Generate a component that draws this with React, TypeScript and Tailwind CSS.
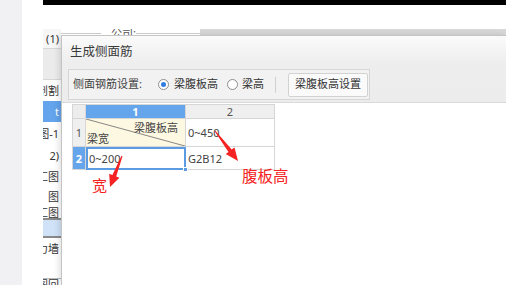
import React from 'react';

const font = "font-['Noto_Sans','Noto_Sans_CJK_SC',sans-serif]";

const listRows = [
  { h: 'h-[19px]', text: '(1)', cls: 'bg-[#f6f6f6] text-[#333]' },
  { h: 'h-[32px]', text: '', cls: 'bg-[#ebebeb] border-y border-[#d6d6d6]' },
  { h: 'h-[21px]', text: '剖割', cls: 'bg-white text-[#333]' },
  { h: 'h-[21px]', text: 't', cls: 'bg-[#63a4ec] text-white' },
  { h: 'h-[23px]', text: '图-1', cls: 'bg-white text-[#333]' },
  { h: 'h-[21px]', text: '2)', cls: 'bg-white text-[#333]' },
  { h: 'h-[20px]', text: '汇图', cls: 'bg-white text-[#333]' },
  { h: 'h-[20px]', text: '图', cls: 'bg-white text-[#333]' },
  { h: 'h-[12px]', text: '汇图', cls: 'bg-white text-[#333]' },
  { h: 'h-[20px]', text: '', cls: 'bg-[#cfe2f7] border-y-2 border-[#8a8a8a]' },
  { h: 'h-[20px]', text: '剪力墙', cls: 'bg-white text-[#333]' },
  { h: 'h-[20px]', text: '', cls: 'bg-white' },
  { h: 'h-[12px]', text: '图回', cls: 'bg-white text-[#333] border-t border-[#bbb]' },
];

const Radio = ({ checked }: { checked?: boolean }) => (
  <span className="w-[11px] h-[11px] rounded-full border border-[#8d8d8d] bg-white flex items-center justify-center">
    {checked && <span className="w-[5px] h-[5px] rounded-full bg-[#2f7de1]" />}
  </span>
);

export default function App() {
  return (
    <div className={`relative w-[506px] h-[285px] overflow-hidden bg-white flex ${font}`}>
      <div className="w-[22px] h-full bg-[#f1f1f3]" />
      <div className="w-[21px] h-full bg-white" />

      <div className="flex-1 flex flex-col min-w-0">
        <div className="h-[5px] bg-black" />
        <div className="h-[24px] bg-white" />

        {/* app behind the dialog */}
        <div className="flex-1 flex min-h-0">
          <div className="w-[18px] flex flex-col overflow-hidden text-[11px] leading-none">
            {listRows.map((r, i) => (
              <div key={i} className={`${r.h} shrink-0 flex items-center justify-end pr-[2px] whitespace-nowrap overflow-hidden ${r.cls}`}>
                {r.text}
              </div>
            ))}
          </div>

          <div className="flex-1 flex flex-col min-w-0">
            <div className="h-[6px] flex overflow-hidden">
              <div className="w-[139px] flex items-start bg-white relative">
                <div className="w-[40px] mt-[4px] h-px bg-[#c9c9c9]" />
                <span className="ml-[10px] -mt-[2px] text-[11px] leading-none text-[#555]">公司:</span>
                <div className="flex-1 mt-[4px] h-px bg-[#c9c9c9]" />
              </div>
              <div className="flex-1 bg-[#d8d8d8]" />
            </div>

            {/* dialog */}
            <div className="flex-1 flex flex-col border-l border-t border-[#c4c4c4] shadow-[-2px_0_6px_rgba(0,0,0,0.12)] min-h-0">
              <div className="bg-[linear-gradient(to_bottom,#fbfbfb,#eeeeee_40%,#ececec)] border-b border-[#dadada]">
                <div className="h-[33px] pl-[8px] flex items-center text-[12.5px] text-[#3a3a3a]">生成侧面筋</div>
                <div className="ml-[6px] mb-[2px] w-[302px] h-[31px] border border-[#d6d6d6] bg-[#f2f2f2] flex items-center pl-[4px] text-[11px] text-[#444]">
                  <span>侧面钢筋设置:</span>
                  <span className="ml-[16px]"><Radio checked /></span>
                  <span className="ml-[5px] text-[#333]">梁腹板高</span>
                  <span className="ml-[9px]"><Radio /></span>
                  <span className="ml-[4px] text-[#333]">梁高</span>
                  <span className="ml-[11px] w-px h-[16px] bg-[#d0d0d0]" />
                  <button className="ml-[12px] h-[24px] px-[6px] border border-[#d2d2d2] rounded-[2px] bg-[#fafafa] text-[#333]">梁腹板高设置</button>
                </div>
              </div>

              <div className="flex-1 bg-white pl-[10px] pt-px">
                <div className="grid grid-cols-[13px_100px_89px] grid-rows-[14px_28px_23px] w-max border-l border-t border-[#d6d6d6] text-[11px] leading-none">
                  <div className="bg-[#ececec] border-r border-b border-[#d6d6d6]" />
                  <div className="bg-[#64a5ec] border-r border-b border-[#d6d6d6] flex items-center justify-center text-white font-bold">1</div>
                  <div className="bg-[#efefef] border-r border-b border-[#d6d6d6] flex items-center justify-center text-[#555]">2</div>

                  <div className="bg-[#efefef] border-r border-b border-[#d6d6d6] flex items-center justify-center text-[#555]">1</div>
                  <div className="relative bg-[#fdf8e2] border-r border-b border-[#d6d6d6] text-[#444]">
                    <svg className="absolute inset-0 w-full h-full" viewBox="0 0 100 28" preserveAspectRatio="none">
                      <line x1="0" y1="0" x2="100" y2="28" stroke="#777" strokeWidth="0.9" />
                    </svg>
                    <span className="absolute right-[7px] top-[3px]">梁腹板高</span>
                    <span className="absolute left-[1px] bottom-[2px]">梁宽</span>
                  </div>
                  <div className="border-r border-b border-[#d6d6d6] flex items-center pl-[2px] text-[#444]">0~450</div>

                  <div className="bg-[#64a5ec] border-r border-b border-[#d6d6d6] flex items-center justify-center text-white font-bold">2</div>
                  <div className="relative border-2 border-[#5b9be2] flex items-center pl-[1px] text-[#444]">
                    0~200
                    <span className="absolute -right-[4px] -bottom-[4px] w-[5px] h-[5px] bg-[#5b9be2] border border-white" />
                  </div>
                  <div className="border-r border-b border-[#d6d6d6] flex items-center pl-[2px] text-[#444]">G2B12</div>
                </div>
              </div>
            </div>
          </div>
        </div>
      </div>

      {/* red annotations */}
      <svg className="absolute inset-0 pointer-events-none" width="506" height="285" viewBox="0 0 506 285">
        <polygon fill="#f42222" points="122.5,156.2 116.2,176.5 119.4,177.8 110,187 109.2,173.8 112.4,175.1 121.5,155.8" />
        <polygon fill="#f42222" points="214.6,131.3 228.5,151.9 225.7,154 238,161 234.5,147.4 231.7,149.5 215.4,130.7" />
      </svg>
      <span className="absolute left-[92px] top-[178px] text-[15px] leading-none text-[#f42222]">宽</span>
      <span className="absolute left-[242px] top-[169px] text-[15.5px] leading-none text-[#f42222]">腹板高</span>
    </div>
  );
}
